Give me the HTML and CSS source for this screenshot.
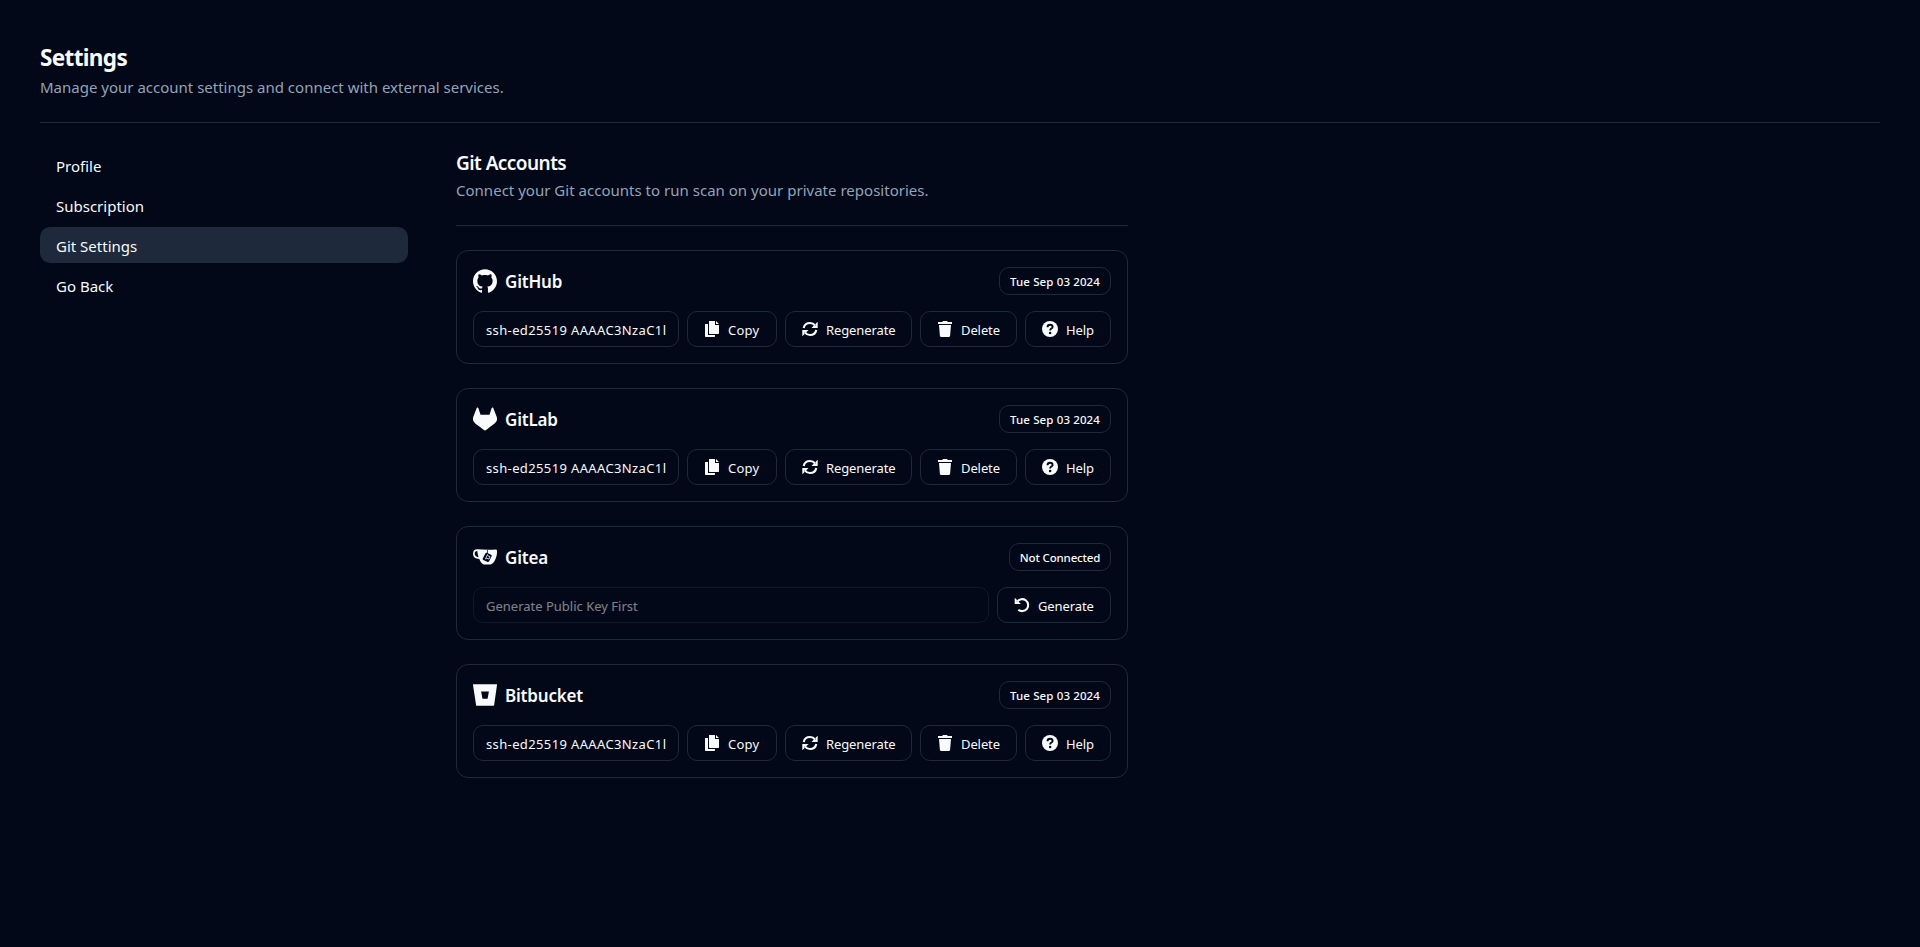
FILE: index.html
```
<!DOCTYPE html>
<html lang="en">
<head>
<meta charset="utf-8">
<title>Settings</title>
<link rel="stylesheet" href="styles.css">
</head>
<body>
<svg class="sprite" aria-hidden="true">
  <symbol id="github" viewBox="0 0 24 24"><path d="M12 .297c-6.63 0-12 5.373-12 12 0 5.303 3.438 9.8 8.205 11.385.6.113.82-.258.82-.577 0-.285-.01-1.04-.015-2.04-3.338.724-4.042-1.61-4.042-1.61C4.422 18.07 3.633 17.7 3.633 17.7c-1.087-.744.084-.729.084-.729 1.205.084 1.838 1.236 1.838 1.236 1.07 1.835 2.809 1.305 3.495.998.108-.776.417-1.305.76-1.605-2.665-.3-5.466-1.332-5.466-5.93 0-1.31.465-2.38 1.235-3.22-.135-.303-.54-1.523.105-3.176 0 0 1.005-.322 3.3 1.23.96-.267 1.98-.399 3-.405 1.02.006 2.04.138 3 .405 2.28-1.552 3.285-1.23 3.285-1.23.645 1.653.24 2.873.12 3.176.765.84 1.23 1.91 1.23 3.22 0 4.61-2.805 5.625-5.475 5.92.42.36.81 1.096.81 2.22 0 1.606-.015 2.896-.015 3.286 0 .315.21.69.825.57C20.565 22.092 24 17.592 24 12.297c0-6.627-5.373-12-12-12"/></symbol>
  <symbol id="gitlab" viewBox="0 0 24 24"><path d="m23.6004 9.5927-.0337-.0862L20.3.9814a.851.851 0 00-.3362-.405.8748.8748 0 00-.9997.0539.8748.8748 0 00-.29.4399l-2.2055 6.748H7.5375l-2.2057-6.748a.8573.8573 0 00-.29-.4412.8748.8748 0 00-.9997-.0537.8585.8585 0 00-.3362.4049L.4332 9.5015l-.0325.0862a6.0657 6.0657 0 002.0119 7.0105l.0113.0087.03.0213 4.976 3.7264 2.462 1.8633 1.4995 1.1321a1.0085 1.0085 0 001.2197 0l1.4995-1.1321 2.4619-1.8633 5.006-3.7489.0125-.01a6.0682 6.0682 0 002.0094-7.003z"/></symbol>
  <symbol id="gitea" viewBox="0 0 24 24"><path fill-rule="evenodd" d="M4.2 4.2C2 4.1 0 5.4 0 8.6c0 3.900 2.700 5.300 6.300 5.400.7 2.400 2.700 4.800 4.600 5.500h6.900c3.600-1 6-7.600 6.200-11.700 0-2.400 0-3.400-.9-3.400-6.300.4-12.600.3-18.900-.2zM4.300 5.900c.3 2.400.6 4.200 1.300 6.300-2.500-.3-3.900-1.400-3.900-3.700 0-1.600.9-2.700 2.600-2.600zM12.500 8.300c.4-.7.9-.8 1.500-.5l.2.1V4.500h.7v3.700l3.100 1.500c.7.300.9.900.6 1.500l-2.500 5.100c-.3.700-.9.900-1.500.6l-4.200-2c-.7-.3-.9-.9-.6-1.500z"/><path d="M14.700 9.200l-2.400 5.100M12.900 13.100l3.100.9 1-2.300-2.500-1.100" fill="none" stroke="currentColor" stroke-width=".8"/></symbol>
  <symbol id="bitbucket" viewBox="0 0 24 24"><path fill-rule="evenodd" d="M.4 1.300h23.200c.3 0 .5.200.4.600l-2.900 20.400c-.1.300-.3.500-.6.500H3.900c-.4 0-.7-.3-.8-.6L0 1.900c0-.4.100-.6.400-.6zM8.100 8.500l1.400 7.200h5.100l1.300-7.200z"/></symbol>
  <symbol id="copy" viewBox="0 0 16 16"><path d="M5 0h6v4h4v8.300a.7.700 0 0 1-.7.700H5.700a.7.700 0 0 1-.7-.7zM12 0l3 3h-3zM1 3h3v11h7v1.300a.7.700 0 0 1-.7.700H1.700a.7.700 0 0 1-.7-.7z"/></symbol>
  <symbol id="refresh" viewBox="0 0 16 16"><g fill="none" stroke="currentColor" stroke-width="2.100"><path d="M1.700 7C2.300 4 4.800 2 8 2c2.200 0 3.900.9 5.200 2.600M14.300 9c-.6 3-3.100 5-6.300 5-2.200 0-3.900-.9-5.200-2.600"/></g><path d="M15.700.7v6.200H9.500l2.100-2.100h2V2.800zM.3 15.300V9.100h6.200l-2.100 2.100h-2v2z"/></symbol>
  <symbol id="trash" viewBox="0 0 16 16"><path d="M1 1.100h4.200L6 0h4l.8 1.100H15V3H1zM2 4h12l-.9 10.800c0 .7-.5 1.200-1.200 1.200H4.100c-.7 0-1.200-.5-1.200-1.200z"/></symbol>
  <symbol id="help" viewBox="0 0 16 16"><circle cx="8" cy="8" r="8"/><path d="M5.500 6.200c.1-1.600 1-2.400 2.500-2.400s2.600.8 2.600 2.100c0 1.700-2.500 1.700-2.500 3.500" fill="none" stroke="#020817" stroke-width="1.900"/><circle cx="8.100" cy="12" r="1.250" fill="#020817"/></symbol>
  <symbol id="undo" viewBox="0 0 16 16"><path d="M3.200 4.700A6 6 0 1 1 4.300 12.700" fill="none" stroke="currentColor" stroke-width="2.100"/><path d="M.7.700v6.200h6.200L4.600 4.800H2.800V2.800z"/></symbol>
</svg>

<div class="page">
  <header class="intro">
    <h1 class="page-title">Settings</h1>
    <p class="lead">Manage your account settings and connect with external services.</p>
  </header>
  <hr class="rule">
  <div class="layout">
    <nav class="side">
      <a class="side-link">Profile</a>
      <a class="side-link">Subscription</a>
      <a class="side-link active">Git Settings</a>
      <a class="side-link">Go Back</a>
    </nav>
    <main class="content">
      <div>
        <h2 class="section-title">Git Accounts</h2>
        <p class="lead section-lead">Connect your Git accounts to run scan on your private repositories.</p>
      </div>
      <hr class="rule">

      <section class="card">
        <div class="card-head"><svg class="logo"><use href="#github"/></svg><h3 class="name">GitHub</h3><span class="badge">Tue Sep 03 2024</span></div>
        <div class="row">
          <div class="key"><div class="key-text">ssh-ed25519 AAAAC3NzaC1l</div></div>
          <button class="btn w-copy"><svg class="icon"><use href="#copy"/></svg>Copy</button>
          <button class="btn w-regen"><svg class="icon"><use href="#refresh"/></svg>Regenerate</button>
          <button class="btn w-delete"><svg class="icon"><use href="#trash"/></svg>Delete</button>
          <button class="btn w-help"><svg class="icon"><use href="#help"/></svg>Help</button>
        </div>
      </section>

      <section class="card">
        <div class="card-head"><svg class="logo"><use href="#gitlab"/></svg><h3 class="name">GitLab</h3><span class="badge">Tue Sep 03 2024</span></div>
        <div class="row">
          <div class="key"><div class="key-text">ssh-ed25519 AAAAC3NzaC1l</div></div>
          <button class="btn w-copy"><svg class="icon"><use href="#copy"/></svg>Copy</button>
          <button class="btn w-regen"><svg class="icon"><use href="#refresh"/></svg>Regenerate</button>
          <button class="btn w-delete"><svg class="icon"><use href="#trash"/></svg>Delete</button>
          <button class="btn w-help"><svg class="icon"><use href="#help"/></svg>Help</button>
        </div>
      </section>

      <section class="card">
        <div class="card-head"><svg class="logo"><use href="#gitea"/></svg><h3 class="name">Gitea</h3><span class="badge badge-off">Not Connected</span></div>
        <div class="row">
          <div class="key empty"><div class="key-text">Generate Public Key First</div></div>
          <button class="btn w-generate"><svg class="icon"><use href="#undo"/></svg>Generate</button>
        </div>
      </section>

      <section class="card">
        <div class="card-head"><svg class="logo"><use href="#bitbucket"/></svg><h3 class="name">Bitbucket</h3><span class="badge">Tue Sep 03 2024</span></div>
        <div class="row">
          <div class="key"><div class="key-text">ssh-ed25519 AAAAC3NzaC1l</div></div>
          <button class="btn w-copy"><svg class="icon"><use href="#copy"/></svg>Copy</button>
          <button class="btn w-regen"><svg class="icon"><use href="#refresh"/></svg>Regenerate</button>
          <button class="btn w-delete"><svg class="icon"><use href="#trash"/></svg>Delete</button>
          <button class="btn w-help"><svg class="icon"><use href="#help"/></svg>Help</button>
        </div>
      </section>
    </main>
  </div>
</div>
</body>
</html>
```
FILE: styles.css
```
*, *::before, *::after { box-sizing: border-box; }

body {
  margin: 0;
  min-height: 100vh;
  background: #020817;
  color: #f8fafc;
  font-family: "Segoe UI", "Noto Sans", "Open Sans", sans-serif;
  font-size: 15px;
  line-height: 24px;
}

h1, h2, h3, p { margin: 0; }

.sprite { display: none; }
.page { padding: 40px; }
.intro { height: 58px; }

.page-title {
  font-size: 22.5px;
  line-height: 32px;
  font-weight: 700;
  letter-spacing: -0.65px;
  padding-top: 2px;
}

.lead { color: #94a3b8; line-height: 26px; margin-bottom: -2px; }
.section-lead { letter-spacing: 0.015px; }

.rule {
  width: 100%;
  height: 1px;
  margin: 24px 0;
  border: 0;
  background: #1e293b;
}

.layout { display: flex; gap: 48px; }

.side {
  display: flex;
  flex-direction: column;
  gap: 4px;
  flex: 0 0 368px;
}

.side-link {
  display: flex;
  align-items: center;
  height: 36px;
  padding: 2px 16px 0;
  border-radius: 10px;
}

.side-link.active { background: #1e293b; }

.content { width: 672px; }

.section-title {
  font-size: 19px;
  line-height: 32px;
  font-weight: 600;
  letter-spacing: -0.55px;
  margin-bottom: -2px;
}

.content > div:first-child { height: 54px; }

.card {
  height: 114px;
  padding: 16px;
  margin-bottom: 24px;
  border: 1px solid #1e293b;
  border-radius: 12px;
}

.card-head { display: flex; align-items: center; gap: 8px; height: 28px; }
.logo { width: 24px; height: 24px; fill: currentColor; }

.name {
  font-size: 17px;
  line-height: 28px;
  font-weight: 600;
  letter-spacing: -0.2px;
  padding-top: 2px;
}

.badge {
  display: flex;
  align-items: center;
  justify-content: center;
  width: 112px;
  height: 28px;
  padding-top: 1px;
  margin-left: auto;
  border: 1px solid #1e293b;
  border-radius: 10px;
  font-size: 11.5px;
  font-weight: 500;
  letter-spacing: 0.12px;
  white-space: nowrap;
}

.badge-off { width: 102px; letter-spacing: -0.15px; }

.row { display: flex; gap: 8px; margin-top: 16px; }

.key {
  flex: 1;
  min-width: 0;
  height: 36px;
  padding: 0 12px;
  border: 1px solid #1e293b;
  border-radius: 10px;
  font-size: 13px;
  line-height: 36px;
  letter-spacing: 0.37px;
}

.key-text { white-space: nowrap; }
.key.empty { opacity: 0.5; letter-spacing: 0; }

.btn {
  display: flex;
  align-items: center;
  gap: 8px;
  flex: none;
  height: 36px;
  padding: 2px 0 0 16px;
  border: 1px solid #1e293b;
  border-radius: 10px;
  background: transparent;
  color: inherit;
  font: inherit;
  font-size: 13px;
  letter-spacing: -0.1px;
  white-space: nowrap;
}

.icon { width: 16px; height: 16px; margin-top: -2px; fill: currentColor; }

.w-copy { width: 90px; letter-spacing: 0.2px; }
.w-regen { width: 127px; }
.w-delete { width: 97px; }
.w-help { width: 86px; }
.w-generate { width: 114px; }
```
